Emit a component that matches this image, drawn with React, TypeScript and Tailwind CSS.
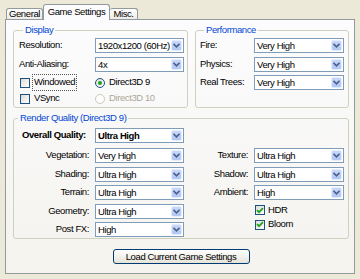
import React from 'react';

function Chevron() {
  return (
    <svg width="7" height="5" viewBox="0 0 7 5" className="block">
      <path d="M0.5 0.8 L3.5 3.8 L6.5 0.8" fill="none" stroke="#4D6185" strokeWidth="1.6" />
    </svg>
  );
}

function Combo({ value, bold = false, w }: { value: string; bold?: boolean; w: string }) {
  return (
    <div className={`${w} h-[15px] shrink-0 border border-[#7F9DB9] bg-white flex items-stretch`}>
      <span className={`flex-1 pl-[2px] leading-[13px] whitespace-nowrap overflow-hidden ${bold ? 'font-bold' : ''}`}>
        {value}
      </span>
      <span className="w-[11px] m-[1px] rounded-[2px] border border-[#E4ECFD] bg-gradient-to-b from-[#C9D8FC] to-[#B1C6F5] flex items-center justify-center">
        <Chevron />
      </span>
    </div>
  );
}

function Check({ checked = false }: { checked?: boolean }) {
  return (
    <span className="w-[10px] h-[10px] shrink-0 border border-[#1C5180] bg-gradient-to-br from-[#DCDCD7] to-white flex items-center justify-center">
      {checked && (
        <svg width="8" height="7" viewBox="0 0 8 7">
          <path d="M1 3.2 L3 5.2 L7 1.2" fill="none" stroke="#21A121" strokeWidth="1.8" />
        </svg>
      )}
    </span>
  );
}

function Radio({ on = false, disabled = false }: { on?: boolean; disabled?: boolean }) {
  return (
    <span
      className={`w-[10px] h-[10px] shrink-0 rounded-full border flex items-center justify-center ${
        disabled ? 'border-[#CAC8BB] bg-white' : 'border-[#1C5180] bg-gradient-to-br from-[#DCDCD7] to-white'
      }`}
    >
      {on && <span className="w-[4px] h-[4px] rounded-full bg-[#21A121]" />}
    </span>
  );
}

function Group({ title, className, children }: { title: string; className: string; children: React.ReactNode }) {
  return (
    <fieldset className={`border border-[#D0D0BF] rounded-[3px] ${className}`}>
      <legend className="ml-[4px] px-[2px] leading-[12px] text-[#0046D5]">{title}</legend>
      {children}
    </fieldset>
  );
}

function Row({ label, value, labelW, comboW, right = false }: { label: string; value: string; labelW: string; comboW: string; right?: boolean }) {
  return (
    <div className="flex items-center h-[15px] gap-[6px]">
      <span className={`${labelW} shrink-0 whitespace-nowrap ${right ? 'text-right' : ''}`}>{label}</span>
      <Combo value={value} w={comboW} />
    </div>
  );
}

export default function App() {
  return (
    <div className="w-[360px] h-[279px] bg-[#ECE9D8] pt-[4px] px-[5px] pb-[5px] flex flex-col text-[9.5px] tracking-[-0.4px] text-black font-['Liberation_Sans',Arial,sans-serif]">
      <div className="flex items-end h-[15px] pl-[1px]">
        <div className="h-[11px] w-[37px] text-center border border-b-0 border-[#919B9C] rounded-t-[3px] bg-gradient-to-b from-white to-[#ECEBE6] leading-[10px]">
          General
        </div>
        <div className="relative z-10 -mb-[1px] h-[16px] w-[67px] text-center border border-b-0 border-[#919B9C] rounded-t-[3px] bg-[#FCFCFE] leading-[13px]">
          Game Settings
        </div>
        <div className="h-[11px] w-[28px] text-center border border-b-0 border-l-0 border-[#919B9C] rounded-t-[3px] bg-gradient-to-b from-white to-[#ECEBE6] leading-[10px]">
          Misc.
        </div>
      </div>

      <div className="flex-1 border border-[#919B9C] bg-gradient-to-b from-[#FCFCFE] to-[#F4F3EE] pt-[4px] pl-[7px] pr-[5px] flex flex-col">
        <div className="flex gap-[7px]">
          <Group title="Display" className="w-[175px] pl-[5px] pr-[3px] pt-[2px] pb-[1px]">
            <div className="flex flex-col gap-[4px]">
              <Row label="Resolution:" value="1920x1200 (60Hz)" labelW="w-[70px]" comboW="w-[89px]" />
              <Row label="Anti-Aliasing:" value="4x" labelW="w-[70px]" comboW="w-[89px]" />
            </div>
            <div className="mt-[3px] flex flex-col gap-[1px]">
              <div className="flex items-center h-[15px]">
                <div className="w-[76px] flex items-center pl-[1px]">
                  <Check />
                  <span className="ml-[2px] px-[1px] border border-dotted border-[#555]">Windowed</span>
                </div>
                <Radio on />
                <span className="ml-[4px]">Direct3D 9</span>
              </div>
              <div className="flex items-center h-[15px]">
                <div className="w-[76px] flex items-center pl-[1px]">
                  <Check />
                  <span className="ml-[4px]">VSync</span>
                </div>
                <Radio disabled />
                <span className="ml-[4px] text-[#ACA899]">Direct3D 10</span>
              </div>
            </div>
          </Group>

          <Group title="Performance" className="flex-1 pl-[4px] pr-[3px] pt-[2px]">
            <div className="flex flex-col gap-[3.5px]">
              <Row label="Fire:" value="Very High" labelW="w-[48px]" comboW="w-[90px]" />
              <Row label="Physics:" value="Very High" labelW="w-[48px]" comboW="w-[90px]" />
              <Row label="Real Trees:" value="Very High" labelW="w-[48px]" comboW="w-[90px]" />
            </div>
          </Group>
        </div>

        <Group title="Render Quality (Direct3D 9)" className="mt-[4px] pt-[4px] pb-[1px] pr-[3px]">
          <div className="flex">
            <div className="flex flex-col">
              <div className="flex items-center h-[15px] gap-[6px] mb-[5px]">
                <span className="w-[75px] pl-[8px] font-bold whitespace-nowrap">Overall Quality:</span>
                <Combo value="Ultra High" bold w="w-[89px]" />
              </div>
              <div className="flex flex-col gap-[3.5px]">
                <Row label="Vegetation:" value="Very High" labelW="w-[75px]" comboW="w-[89px]" right />
                <Row label="Shading:" value="Ultra High" labelW="w-[75px]" comboW="w-[89px]" right />
                <Row label="Terrain:" value="Ultra High" labelW="w-[75px]" comboW="w-[89px]" right />
                <Row label="Geometry:" value="Ultra High" labelW="w-[75px]" comboW="w-[89px]" right />
                <Row label="Post FX:" value="High" labelW="w-[75px]" comboW="w-[89px]" right />
              </div>
            </div>
            <div className="flex flex-col pt-[20px] ml-[6px]">
              <div className="flex flex-col gap-[3.5px]">
                <Row label="Texture:" value="Ultra High" labelW="w-[58px]" comboW="w-[90px]" right />
                <Row label="Shadow:" value="Ultra High" labelW="w-[58px]" comboW="w-[90px]" right />
                <Row label="Ambient:" value="High" labelW="w-[58px]" comboW="w-[90px]" right />
              </div>
              <div className="mt-[3.5px] pl-[65px] flex flex-col gap-[1.5px]">
                <div className="flex items-center h-[13px] gap-[3px]">
                  <Check checked />
                  <span>HDR</span>
                </div>
                <div className="flex items-center h-[13px] gap-[3px]">
                  <Check checked />
                  <span>Bloom</span>
                </div>
              </div>
            </div>
          </div>
        </Group>

        <div className="mt-[10px] flex justify-center">
          <button className="w-[137px] h-[15px] border border-[#003C74] rounded-[3px] bg-gradient-to-b from-white to-[#E6E3D8] leading-[13px] text-center">
            Load Current Game Settings
          </button>
        </div>
      </div>
    </div>
  );
}
